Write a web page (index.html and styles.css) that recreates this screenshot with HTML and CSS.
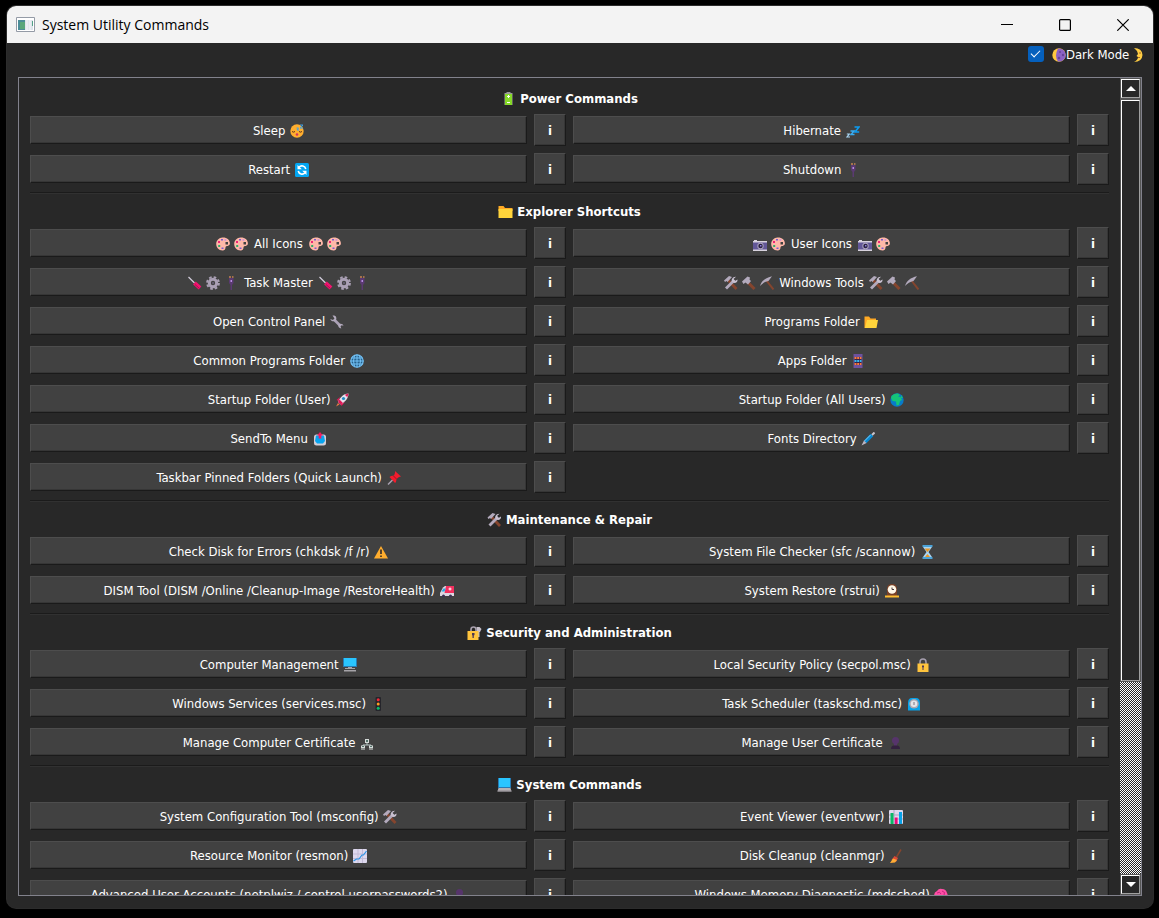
FILE: index.html
```
<!DOCTYPE html>
<html lang="en">
<head>
<meta charset="utf-8">
<title>System Utility Commands</title>
<link rel="stylesheet" href="styles.css">
</head>
<body>
<svg class="sprite" aria-hidden="true">
  <symbol id="battery" viewBox="0 0 14 14"><path fill="#9a9a9a" d="M5 0h4v1h2v12H3V1h2z"/><path fill="#86d928" d="M3.500 2h7v11h-7z"/><path stroke="#fff" d="M7 3v3M5.500 4.500h3M5.500 10.500h3"/></symbol>
  <symbol id="sleepy" viewBox="0 0 14 14"><circle cx="7" cy="7" r="6.700" fill="#ffae2e"/><path d="M2 7.500q1.500 1.300 3 0M9 7.500q1.500 1.300 3 0" fill="none" stroke="#5b3320"/><circle cx="7" cy="10.500" r="1.300" fill="#d2335c"/><path d="M6.500 4h2L7 6h2M10 1h3l-3 3h3" fill="none" stroke="#3aa0e8"/></symbol>
  <symbol id="zzz" viewBox="0 0 14 14"><path d="M8.500 3H13L9 8h4.200" fill="none" stroke="#0c9bef" stroke-width="1.700"/><path d="M4.500 7H8L5 10.500h3.500" fill="none" stroke="#39adf2" stroke-width="1.400"/><path d="M.8 10h2.500L1 13h3" fill="none" stroke="#a9d6f4" stroke-width="1.200"/></symbol>
  <symbol id="restart" viewBox="0 0 14 14"><rect width="14" height="14" rx="1.500" fill="#03a6f2"/><path d="M10.800 6A4 4 0 0 0 4 4.200M3.200 8A4 4 0 0 0 10 9.800" fill="none" stroke="#fff" stroke-width="1.600"/><path fill="#fff" d="M2.500 2v4.300h4.300zM11.500 12V7.700H7.200z"/></symbol>
  <symbol id="plug" viewBox="0 0 14 14"><path fill="#a5734c" d="M5 0h2v2H5zM8 0h1.500v2H8z"/><path fill="#5b3a72" d="M5 2h4.500v5L8 9v5H6.500V9L5 7z"/><path fill="#b58be0" d="M6.500 4h1.500v2H6.500z"/></symbol>
  <symbol id="folder" viewBox="0 0 14 14"><path fill="#ffa924" d="M0 1h5l1.500 2H14v3H0z"/><path fill="#ffd43b" d="M0 4h14v9H0z"/></symbol>
  <symbol id="palette" viewBox="0 0 14 14"><path fill="#ffb8a8" fill-rule="evenodd" d="M6.500.5C11 .3 14 3 13.900 6.500c0 2.500-3 2.300-4 3-1 .8.500 3.700-3 4C3 13.800.2 10.500.2 7 .2 3.500 3 .6 6.500.5zM9.500 5v2.500H12V5z"/><path fill="#ef2678" d="M2 4h2v2H2z"/><path fill="#785bd0" d="M5 2h2v1.500H5zM5.500 10.500h2V12h-2z"/><path fill="#2fae68" d="M2.200 8h2v2h-2z"/><path fill="#c58be0" d="M8.500 2.200h1.700v1.500H8.500z"/></symbol>
  <symbol id="camera" viewBox="0 0 14 14"><path fill="#d8d3de" d="M0 4h14v10H0zM1 3h3v1H1z"/><path fill="#625798" d="M0 5.500h14v7H0z"/><circle cx="7.500" cy="9" r="3.200" fill="#aaa2bd"/><circle cx="7.500" cy="9" r="2.200" fill="#292043"/><path fill="#8b7ce0" d="M7 8h1.500v1.500H7z"/></symbol>
  <symbol id="screwdriver" viewBox="0 0 14 14"><path d="M.5 1 6.500 7" stroke="#d3cddc" stroke-width="1.300"/><path d="m6.500 7 5.500 5" stroke="#f2126e" stroke-width="4"/><path d="m7 8.500 4.500 4" stroke="#a80d53"/></symbol>
  <symbol id="gear" viewBox="0 0 14 14"><circle cx="7" cy="7" r="5.900" fill="none" stroke="#aaa0b5" stroke-width="2" stroke-dasharray="2.600 2.030"/><circle cx="7" cy="7" r="3.700" fill="none" stroke="#aaa0b5" stroke-width="3"/><circle cx="7" cy="7" r="1.200" fill="#625b6e"/></symbol>
  <symbol id="tools" viewBox="0 0 14 14"><path d="m4 4 8.500 9" stroke="#85452e" stroke-width="2.800"/><path d="M0 4.500 5 0l3 1-4.500 5-1-1L1 6z" fill="#b3aabd"/><path d="m2 12.500 8.500-8.500" stroke="#b3aabd" stroke-width="2.800"/><path d="M12 .7 9.500 3l1.500 2 2.500-1.500c.5 3-3 4.500-5 2.500S8.500.5 12 .7z" fill="#c9c1d1"/></symbol>
  <symbol id="hammer" viewBox="0 0 14 14"><path d="m5 5.500 7.500 7.500" stroke="#85452e" stroke-width="3"/><path d="M0 5.500 5.500.5l2.500 1-.5 2L9 5 6 8.500l-2.500-2L1.500 8z" fill="#b3aabd"/></symbol>
  <symbol id="pick" viewBox="0 0 14 14"><path d="m6 4 7.500 9.500" stroke="#85452e" stroke-width="2"/><path d="M0 10C1.500 5 5.500 1.500 12 .2L8.500 5C5 5.500 2.500 7.500 0 10z" fill="#b3aabd"/></symbol>
  <symbol id="wrench" viewBox="0 0 14 14"><path d="M4 4.500 10.500 11" stroke="#aaa0b5" stroke-width="2.600"/><path fill="#b3aabd" d="M2.500.5C6 0 7 2.500 6 5.200 4 7.200 1 6.500.3 4L3 5l1.500-1.500zM8.500 9.500c2-1.500 4.500-.8 5 1.300l-2-.5-1 1 .8 2.200c-2.300-.2-3.500-2-2.800-4z"/></symbol>
  <symbol id="openfolder" viewBox="0 0 14 14"><path fill="#ffa924" d="M.5 1.500h4.500l1.500 2H12V9L3 13H.5z"/><path fill="#ffd43b" d="M3 5h11l-1.500 8H.8z"/></symbol>
  <symbol id="globe" viewBox="0 0 14 14"><circle cx="7" cy="7" r="6.200" fill="#27618b" stroke="#73c1f5" stroke-width="1.200"/><path fill="none" stroke="#73c1f5" d="M.5 7h13M7 .5v13M1.500 4h11M1.500 10h11M4.500 1.500q-2 5.500 0 11M9.500 1.500q2 5.500 0 11"/></symbol>
  <symbol id="abacus" viewBox="0 0 14 14"><path fill="#6e529e" d="M2.500 0h9v14h-9z"/><path fill="#33234b" d="M3.500 3h7v8h-7z"/><path stroke="#ff7b39" stroke-width="1.800" stroke-dasharray="2 .7" d="M3.500 4h7M3.500 10h7"/><path stroke="#35b9ed" stroke-width="1.800" stroke-dasharray="2 .7" d="M3.500 7h7"/></symbol>
  <symbol id="rocket" viewBox="0 0 14 14"><path fill="#e11655" d="M5 4 1.500 7l2 1zM10 9l-3.500 4-1-2.500z"/><path fill="#e6dfeb" d="M13.500.5C9 .5 5.500 3.500 3 9l2.500 2.500C10.500 9 13.500 5 13.500.5z"/><path fill="#e11655" d="M13.500.5 9.800 1.800l2.500 2.500zM3 9l2.500 2.500L8 10 4.500 6.500z"/><circle cx="8.500" cy="5.500" r="1.600" fill="#208dc7"/><path fill="#ee7844" d="m3 10 1.500 1.500L1 13.500z"/></symbol>
  <symbol id="earth" viewBox="0 0 14 14"><circle cx="7" cy="7" r="6.700" fill="#087bc9"/><path fill="#15c578" d="M1.500 3Q4 0 8 .5L10 2 8 3.500l2.500.5L12 7l-2 1-1 4-2.500.5L6 8.500 2.500 8 1 5zM11 2l2 3h-2z"/></symbol>
  <symbol id="outbox" viewBox="0 0 14 14"><rect x="1" y="2.500" width="12" height="11" rx="2.500" fill="#d2ced7"/><path fill="#07a4ef" d="M3 3.500h8L12 9l-2 2.500H4L2 9z"/><path fill="#f21c62" d="M7 0l3 3.500H8.300v3H5.700v-3H4z"/></symbol>
  <symbol id="pen" viewBox="0 0 14 14"><path d="m4 10 7-7" stroke="#0789d3" stroke-width="3.600"/><path d="m3.500 9 6-6" stroke="#7cc9f3"/><path d="m11 3 2.500-2.500" stroke="#c9c4cd" stroke-width="2"/><path fill="#bbb5c3" d="m3 8.500 2.500 2.500L.5 13.500z"/></symbol>
  <symbol id="pushpin" viewBox="0 0 14 14"><path d="m1 13.500 5-5" stroke="#aaa2b2" stroke-width="1.400"/><path fill="#f21d2d" d="M8 0 14 5.500 12 6 9.500 8l-.5 3-1 1L2.500 6 4 5l3-.5L8 2z"/><path stroke="#a90c22" d="m6.500 5 3 3"/></symbol>
  <symbol id="warning" viewBox="0 0 14 14"><path fill="#ffad2e" d="M7 1 14 13.500H0z"/><path stroke="#332a28" stroke-width="1.600" d="M7 4.500V9M7 10.500V12"/></symbol>
  <symbol id="hourglass" viewBox="0 0 14 14"><path fill="#a8d5f4" d="M3 2h9L8.500 7 12 12H3l3.500-5z"/><path fill="#e89624" d="M4.500 3.500h6L7.500 7zM7.500 9l2.500 3H5z"/><path fill="#4ba3d8" d="M2.500 0h10v2h-10zM2.500 12h10v2h-10z"/></symbol>
  <symbol id="ambulance" viewBox="0 0 14 14"><path fill="#ddd7e2" d="M3 3.500 0 9v3h14V2H5z"/><path fill="#f2305f" d="M6 2h8v7H4.500z"/><path fill="#27a8e5" d="m3.500 4.500-2 3h3l1.200-3z"/><path stroke="#fff" d="M10 3.500v3M8.500 5h3"/><circle cx="3.500" cy="12" r="1.500" fill="#3a3152"/><circle cx="10.500" cy="12" r="1.500" fill="#3a3152"/></symbol>
  <symbol id="mantelclock" viewBox="0 0 14 14"><path fill="#784027" d="M2 12V5Q2 0 7 0t5 5v7z"/><circle cx="7" cy="5.500" r="4.300" fill="#fff8e8"/><path d="M7 3.500v2h2" fill="none" stroke="#42343c"/><path fill="#ffbd2f" d="M0 11.500h14v2H0z"/></symbol>
  <symbol id="lockkey" viewBox="0 0 14 14"><path d="M3.500 6V3.500a2.500 2.500 0 0 1 5 0V6" fill="none" stroke="#a8a0ad" stroke-width="1.600"/><path fill="#c6bfc9" d="M9 1h3l2 2-1.500 3H12v5h-2z"/><path fill="#ffc43d" d="M0 5h11v9H0z"/><path fill="#4b3654" d="M4.500 7h2.500v2l-.7.500V12H5V9.500L4.500 9z"/></symbol>
  <symbol id="desktop" viewBox="0 0 14 14"><path fill="#277bb5" d="M0 0h14v9H0z"/><path fill="#29c5ff" d="M1 0h12v8H1z"/><path fill="#a5a3a8" d="M5 9h4v1h3v1H2v-1h3zM1 12h12v1.500H1z"/></symbol>
  <symbol id="lock" viewBox="0 0 14 14"><path d="M4 6V4a3 3 0 0 1 6 0v2" fill="none" stroke="#a69fae" stroke-width="1.500"/><path fill="#ffc43d" d="M1.500 5.500h11V14h-11z"/><path fill="#4b3654" d="M6 7.500h2V9l-.5.500V12h-1V9.500L6 9z"/></symbol>
  <symbol id="traffic" viewBox="0 0 14 14"><rect x="4.500" width="5.500" height="14" rx="1" fill="#25252b"/><circle cx="7.200" cy="2.800" r="1.500" fill="#ef2939"/><circle cx="7.200" cy="7" r="1.500" fill="#ff9e21"/><circle cx="7.200" cy="11.200" r="1.500" fill="#08bd6b"/></symbol>
  <symbol id="timer" viewBox="0 0 14 14"><path fill="#08a2e8" d="M1 13.500V6Q1 1 5 1h4q4 0 4 5v7.500z"/><circle cx="7" cy="6.800" r="4.800" fill="#aaa7b2"/><circle cx="7" cy="6.800" r="3.300" fill="#e5e4e8"/><path stroke="#7a7684" d="M7 5v3"/></symbol>
  <symbol id="network" viewBox="0 0 14 14"><path d="M7 7v2M3 11V9h8v2" fill="none" stroke="#b6c7c5"/><path fill="#d5dbd9" d="M5 3h4v4H5zM1 9.500h4V12H1zM9 9.500h4V12H9zM1 12.500h4v1H1zM9 12.500h4v1H9z"/><path fill="#55736b" d="M6 4h2v2H6zM2 10h2v1H2zM10 10h2v1h-2z"/></symbol>
  <symbol id="bust" viewBox="0 0 14 14"><circle cx="7.500" cy="4.500" r="3.500" fill="#56346b"/><path fill="#56346b" d="M6 7h3v3H6z"/><path fill="#33213f" d="M3 13q0-3.500 3-3.500h3q3 0 3 3.500z"/></symbol>
  <symbol id="laptop" viewBox="0 0 14 14"><path fill="#277bb5" d="M.5 0h13v10H.5z"/><path fill="#29c5ff" d="M1.500 0h11v9h-11z"/><path fill="#b5b2b5" d="M1 10h12l1 3.500H0z"/><path fill="#8e8b91" d="M0 12.500h14v1H0z"/></symbol>
  <symbol id="barchart" viewBox="0 0 14 14"><rect width="14" height="14" rx="1" fill="#ddd8ee"/><path stroke="#aba4c1" d="M0 5h14M0 9h14M5 0v14"/><path fill="#08b966" d="M1.500 3h3v11h-3z"/><path fill="#ef087c" d="M5.800 7.500h2.800V14H5.800z"/><path fill="#08a2e8" d="M10 2h3v12h-3z"/></symbol>
  <symbol id="linechart" viewBox="0 0 14 14"><rect width="14" height="14" rx="1" fill="#ddd8ee"/><path stroke="#c2bbd6" d="M0 5h14M0 9.500h14M5 0v14M9.500 0v14"/><path fill="none" stroke="#2793e5" stroke-width="1.200" d="m.5 12 3-2L6 10l3-4h1.500L13.500 2"/></symbol>
  <symbol id="brush" viewBox="0 0 14 14"><path d="M12 .5 7.500 8" stroke="#85452e" stroke-width="1.500"/><path fill="#dd4936" d="m5.500 7 3.500 2-2 4-4.500-2z"/><path fill="#ffab35" d="M4 9.500 8 11l-2 2.500-5 .5z"/></symbol>
  <symbol id="brain" viewBox="0 0 14 14"><path fill="#ff4fa6" d="M3 3Q5 0 8 1q4 0 5 4 2 4-2 5l-3 1-1 3-3-4Q0 10 .2 7 0 4 3 3z"/><path fill="none" stroke="#c82382" d="M3 5q3-2 4 1M8 3q4 1 2 4M3 8h5"/></symbol>
  <symbol id="moonphase" viewBox="0 0 14 14"><circle cx="7" cy="7" r="6.700" fill="#ffc83e"/><path fill="#8b62c5" d="M6 .5a6.600 6.600 0 1 1 0 13Q2 8 6 .5z"/><g fill="#65449a"><circle cx="8" cy="4" r="1"/><circle cx="11" cy="7" r="1.200"/><circle cx="7" cy="10" r="1.300"/></g></symbol>
  <symbol id="crescent" viewBox="4 0 10 14"><path fill="#ffcd43" d="M5 0q8 0 8.500 7Q13 14 5 14q4-2 4-5L7.500 8 9 6Q8 2 5 0z"/><path fill="#a86628" d="M10 4.500h2v1h-2zM9 9h2v1H9z"/></symbol>
</svg>

<main class="window">
  <header class="titlebar">
    <svg class="app-icon" viewBox="0 0 19 16" aria-hidden="true"><path fill="#fff" stroke="#949ba6" d="M.5.500h18v14H.5z"/><path fill="#dfe5ec" d="M2 3h15v10H2z"/><path fill="#4b8d97" d="M2 3h7v10H2z"/><path fill="#58a77b" d="M4 5h5v7H4z"/><path fill="#e9eef3" d="M10 3h2v10h-2zM13 3h2v10h-2z"/><path fill="#52a287" d="M16 4h1v5h-1z"/></svg>
    <h1>System Utility Commands</h1>
    <div class="window-controls">
      <button type="button" aria-label="Minimize"><svg viewBox="0 0 12 12"><path d="M0 5.500h12"/></svg></button>
      <button type="button" aria-label="Maximize"><svg viewBox="0 0 12 12"><rect x=".6" y=".6" width="10.800" height="10.800" rx="1"/></svg></button>
      <button type="button" aria-label="Close"><svg viewBox="0 0 12 12"><path d="m.3.300 11.400 11.400M11.700.300.3 11.700"/></svg></button>
    </div>
  </header>

  <div class="options">
    <input type="checkbox" id="dark" checked>
    <label for="dark"><svg class="ico"><use href="#moonphase"/></svg>Dark Mode <svg class="ico crescent"><use href="#crescent"/></svg></label>
  </div>

  <div class="frame">
    <div class="list">
      <section>
        <h2><svg class="ico"><use href="#battery"/></svg> Power Commands</h2>
        <div class="commands">
          <button class="cmd">Sleep <svg class="ico"><use href="#sleepy"/></svg></button><button class="info">i</button>
          <button class="cmd">Hibernate <svg class="ico"><use href="#zzz"/></svg></button><button class="info">i</button>
          <button class="cmd">Restart <svg class="ico"><use href="#restart"/></svg></button><button class="info">i</button>
          <button class="cmd">Shutdown <svg class="ico"><use href="#plug"/></svg></button><button class="info">i</button>
        </div>
      </section>
      <section>
        <h2><svg class="ico"><use href="#folder"/></svg> Explorer Shortcuts</h2>
        <div class="commands">
          <button class="cmd"><span class="icons"><svg class="ico"><use href="#palette"/></svg><svg class="ico"><use href="#palette"/></svg></span> All Icons <span class="icons"><svg class="ico"><use href="#palette"/></svg><svg class="ico"><use href="#palette"/></svg></span></button><button class="info">i</button>
          <button class="cmd"><span class="icons"><svg class="ico"><use href="#camera"/></svg><svg class="ico"><use href="#palette"/></svg></span> User Icons <span class="icons"><svg class="ico"><use href="#camera"/></svg><svg class="ico"><use href="#palette"/></svg></span></button><button class="info">i</button>
          <button class="cmd"><span class="icons"><svg class="ico"><use href="#screwdriver"/></svg><svg class="ico"><use href="#gear"/></svg><svg class="ico"><use href="#plug"/></svg></span> Task Master <span class="icons"><svg class="ico"><use href="#screwdriver"/></svg><svg class="ico"><use href="#gear"/></svg><svg class="ico"><use href="#plug"/></svg></span></button><button class="info">i</button>
          <button class="cmd"><span class="icons"><svg class="ico"><use href="#tools"/></svg><svg class="ico"><use href="#hammer"/></svg><svg class="ico"><use href="#pick"/></svg></span> Windows Tools <span class="icons"><svg class="ico"><use href="#tools"/></svg><svg class="ico"><use href="#hammer"/></svg><svg class="ico"><use href="#pick"/></svg></span></button><button class="info">i</button>
          <button class="cmd">Open Control Panel <svg class="ico"><use href="#wrench"/></svg></button><button class="info">i</button>
          <button class="cmd">Programs Folder <svg class="ico"><use href="#openfolder"/></svg></button><button class="info">i</button>
          <button class="cmd">Common Programs Folder <svg class="ico"><use href="#globe"/></svg></button><button class="info">i</button>
          <button class="cmd">Apps Folder <svg class="ico"><use href="#abacus"/></svg></button><button class="info">i</button>
          <button class="cmd">Startup Folder (User) <svg class="ico"><use href="#rocket"/></svg></button><button class="info">i</button>
          <button class="cmd">Startup Folder (All Users) <svg class="ico"><use href="#earth"/></svg></button><button class="info">i</button>
          <button class="cmd">SendTo Menu <svg class="ico"><use href="#outbox"/></svg></button><button class="info">i</button>
          <button class="cmd">Fonts Directory <svg class="ico"><use href="#pen"/></svg></button><button class="info">i</button>
          <button class="cmd">Taskbar Pinned Folders (Quick Launch) <svg class="ico"><use href="#pushpin"/></svg></button><button class="info">i</button>
        </div>
      </section>
      <section>
        <h2><svg class="ico"><use href="#tools"/></svg> Maintenance &amp; Repair</h2>
        <div class="commands">
          <button class="cmd">Check Disk for Errors (chkdsk /f /r) <svg class="ico"><use href="#warning"/></svg></button><button class="info">i</button>
          <button class="cmd">System File Checker (sfc /scannow) <svg class="ico"><use href="#hourglass"/></svg></button><button class="info">i</button>
          <button class="cmd">DISM Tool (DISM /Online /Cleanup-Image /RestoreHealth) <svg class="ico"><use href="#ambulance"/></svg></button><button class="info">i</button>
          <button class="cmd">System Restore (rstrui) <svg class="ico"><use href="#mantelclock"/></svg></button><button class="info">i</button>
        </div>
      </section>
      <section>
        <h2><svg class="ico"><use href="#lockkey"/></svg> Security and Administration</h2>
        <div class="commands">
          <button class="cmd">Computer Management <svg class="ico"><use href="#desktop"/></svg></button><button class="info">i</button>
          <button class="cmd">Local Security Policy (secpol.msc) <svg class="ico"><use href="#lock"/></svg></button><button class="info">i</button>
          <button class="cmd">Windows Services (services.msc) <svg class="ico"><use href="#traffic"/></svg></button><button class="info">i</button>
          <button class="cmd">Task Scheduler (taskschd.msc) <svg class="ico"><use href="#timer"/></svg></button><button class="info">i</button>
          <button class="cmd">Manage Computer Certificate <svg class="ico"><use href="#network"/></svg></button><button class="info">i</button>
          <button class="cmd">Manage User Certificate <svg class="ico"><use href="#bust"/></svg></button><button class="info">i</button>
        </div>
      </section>
      <section>
        <h2><svg class="ico"><use href="#laptop"/></svg> System Commands</h2>
        <div class="commands">
          <button class="cmd">System Configuration Tool (msconfig) <svg class="ico"><use href="#tools"/></svg></button><button class="info">i</button>
          <button class="cmd">Event Viewer (eventvwr) <svg class="ico"><use href="#barchart"/></svg></button><button class="info">i</button>
          <button class="cmd">Resource Monitor (resmon) <svg class="ico"><use href="#linechart"/></svg></button><button class="info">i</button>
          <button class="cmd">Disk Cleanup (cleanmgr) <svg class="ico"><use href="#brush"/></svg></button><button class="info">i</button>
          <button class="cmd">Advanced User Accounts (netplwiz / control userpasswords2) <svg class="ico"><use href="#bust"/></svg></button><button class="info">i</button>
          <button class="cmd">Windows Memory Diagnostic (mdsched) <svg class="ico"><use href="#brain"/></svg></button><button class="info">i</button>
        </div>
      </section>
    </div>
    <div class="scrollbar">
      <button type="button" class="arrow" aria-label="Scroll up"><svg viewBox="0 0 10 5"><path d="M5 0l5 5H0z"/></svg></button>
      <div class="track"><div class="thumb"></div></div>
      <button type="button" class="arrow" aria-label="Scroll down"><svg viewBox="0 0 10 5"><path d="M0 0h10L5 5z"/></svg></button>
    </div>
  </div>
</main>
</body>
</html>
```
FILE: styles.css
```
* { box-sizing: border-box; }

body {
  margin: 0;
  height: 100vh;
  padding: 6px 6px 10px 7px;
  background: #000;
  color: #fff;
  font: 13px/17px "DejaVu Sans Condensed", "DejaVu Sans", sans-serif;
}

button {
  font: inherit;
  color: inherit;
  padding: 0;
  border: 0;
  background: none;
}

.sprite {
  position: absolute;
  width: 0;
  height: 0;
}

.window {
  display: flex;
  flex-direction: column;
  height: 100%;
  overflow: hidden;
  background: #282828;
  border-radius: 9px;
  box-shadow: 0 0 0 1px #2c2c2c;
}

.titlebar {
  display: flex;
  flex: none;
  align-items: center;
  height: 37px;
  padding: 0 1px 0 9px;
  background: #f3f3f3;
  color: #000;
}

.app-icon {
  width: 19px;
  height: 16px;
  margin-right: 7px;
}

.titlebar h1 {
  flex: 1;
  margin: 0;
  font: 14px/20px "Open Sans", sans-serif;
}

.window-controls { display: flex; }

.window-controls button {
  display: grid;
  place-items: center;
  width: 58px;
  height: 37px;
}

.window-controls svg {
  width: 12px;
  height: 12px;
  fill: none;
  stroke: #000;
  stroke-width: 1.2;
}

.options {
  display: flex;
  flex: none;
  align-items: center;
  justify-content: flex-end;
  gap: 8px;
  height: 34px;
  padding: 2px 10px 14px;
}

.options input {
  display: grid;
  place-items: center;
  appearance: none;
  width: 16px;
  height: 16px;
  margin: 0;
  border-radius: 3px;
  background: #0560bd;
}

.options input:checked::before {
  content: "";
  width: 8px;
  height: 4px;
  margin-bottom: 3px;
  border: solid #fff;
  border-width: 0 0 1px 1px;
  transform: rotate(-45deg);
}

.ico {
  width: 14px;
  height: 14px;
  vertical-align: -3px;
}

.crescent { width: 10px; }

.frame {
  display: flex;
  flex: 1;
  min-height: 0;
  margin: 0 11px 12px;
  border: 1px solid #82828c;
}

.list {
  flex: 1;
  overflow: hidden;
  padding: 10px 11px;
}

section + section {
  margin-top: 7px;
  border-top: 1px solid #1b1b1b;
  box-shadow: inset 0 1px #313131;
  padding-top: 8px;
}

h2 {
  margin: 0 0 5px;
  font-size: 13px;
  line-height: 21px;
  text-align: center;
}

h2 .ico { width: 15px; }

.commands {
  display: grid;
  grid-template-columns: 1fr 32px 1fr 32px;
  gap: 7px;
  align-items: center;
}

.cmd,
.info {
  background: #414141;
  border: 1px solid;
  border-color: #4d4d4d #1a1a1a #1a1a1a #4d4d4d;
  box-shadow: inset -1px -1px #363636;
  white-space: nowrap;
}

.cmd { height: 28px; }

.cmd > .ico { margin-left: 1px; }

.icons {
  display: inline-flex;
  gap: 4px;
  margin: 0 2px;
  vertical-align: -3px;
}

.info {
  height: 32px;
  font-weight: 700;
}

.scrollbar {
  display: flex;
  flex-direction: column;
  width: 21px;
}

.arrow,
.thumb {
  border: 1px solid;
  border-color: #fff #a0a0a0 #a0a0a0 #fff;
  outline: 1px solid #555;
  background: #282828;
}

.arrow {
  display: grid;
  place-items: center;
  flex: none;
  height: 19px;
  margin: 1px;
}

.arrow svg {
  width: 10px;
  height: 5px;
  fill: #fff;
}

.track {
  flex: 1;
  padding-top: 1px;
  background: repeating-conic-gradient(#fff 0 25%, #282828 0 50%) 0 0 / 2px 2px;
}

.thumb {
  height: 75%;
  margin: 0 1px;
}
```
